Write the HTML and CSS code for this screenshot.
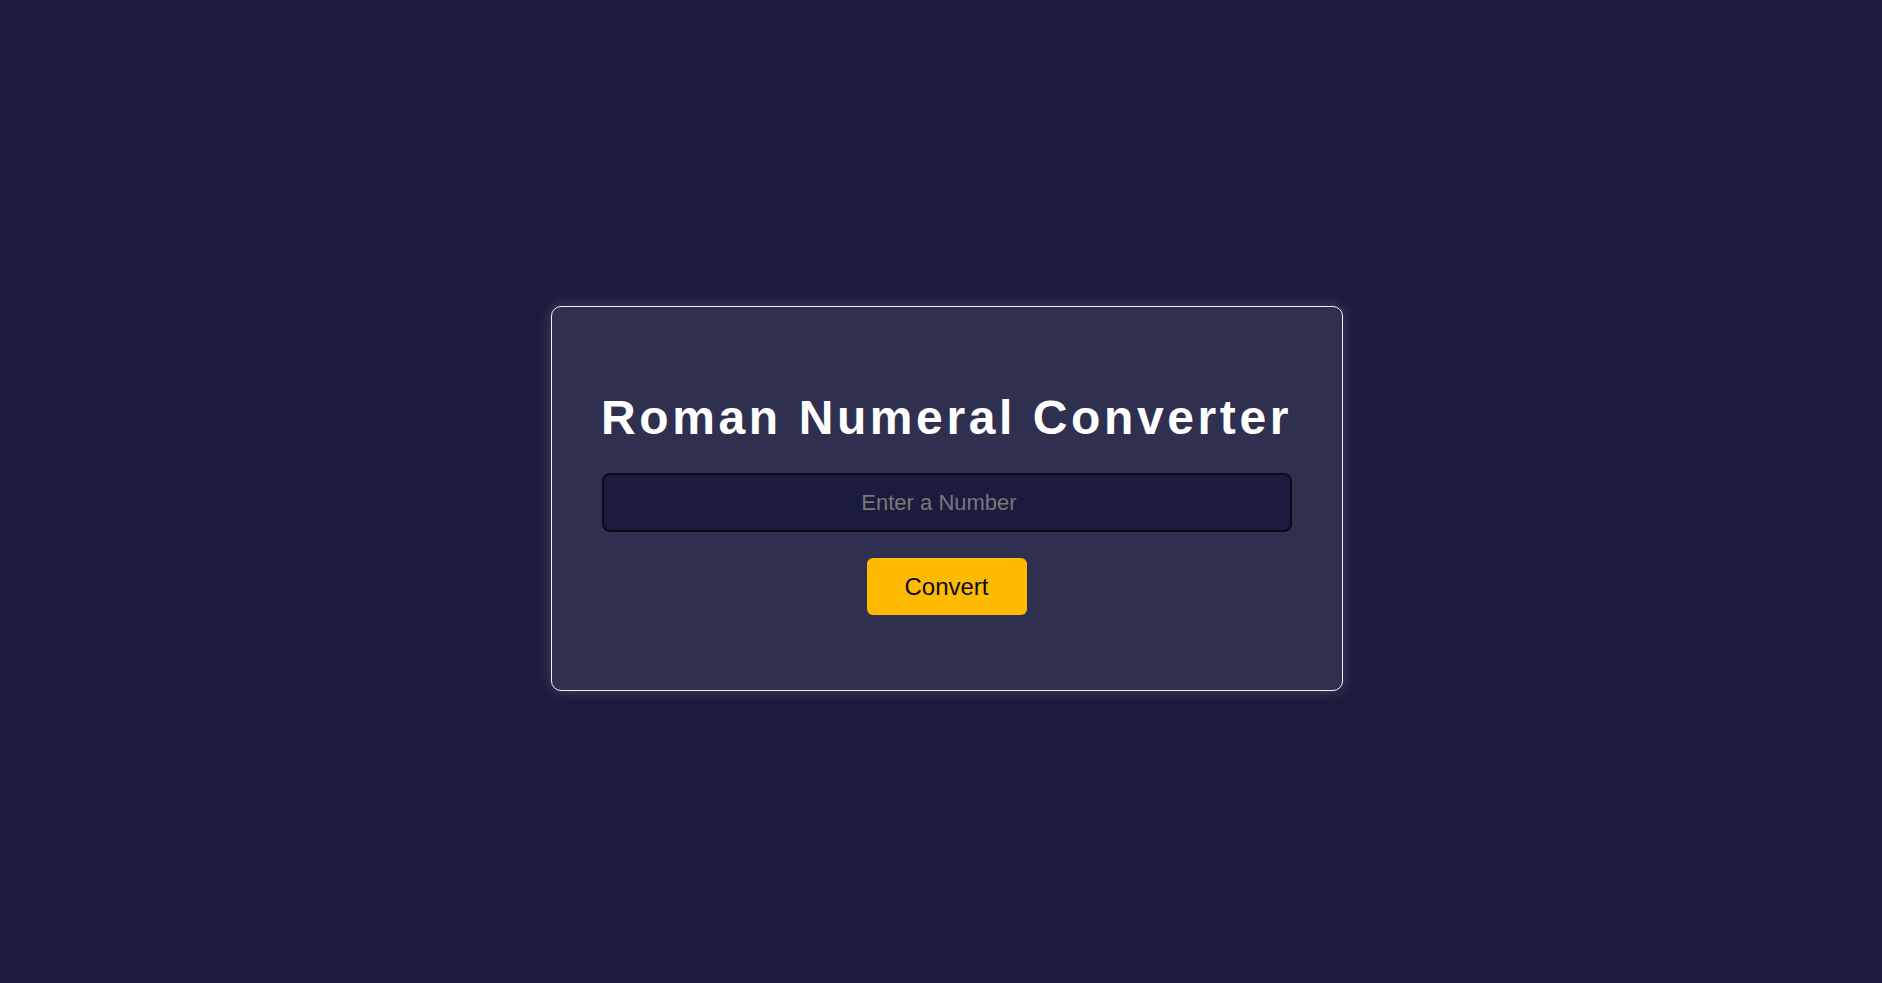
FILE: index.html
```html
<!DOCTYPE html>
<html lang="en">
<head>
<meta charset="UTF-8">
<title>Roman Numeral Converter</title>
<link rel="stylesheet" href="styles.css">
</head>
<body>
  <main class="card">
    <h1 class="title">Roman Numeral Converter</h1>
    <input class="number-input" type="number" placeholder="Enter a Number">
    <button class="convert-btn" type="button">Convert</button>
  </main>
</body>
</html>
```

FILE: styles.css
```css
html, body {
  margin: 0;
  height: 100%;
}
body {
  box-sizing: border-box;
  background: #1b1b3e;
  font-family: "Liberation Sans", Arial, sans-serif;
  display: flex;
  justify-content: center;
  align-items: center;
  padding: 14px 0 0 11px;
}
.card {
  box-sizing: border-box;
  width: 792px;
  height: 385px;
  background: #2f2f4f;
  border: 1px solid #f0f0f5;
  border-radius: 10px;
  box-shadow: 0 0 14px rgba(255, 255, 255, 0.18);
  padding: 54px 50px 50px;
  display: flex;
  flex-direction: column;
  align-items: center;
}
.title {
  margin: 31px 0 29px;
  color: #ffffff;
  font-size: 48px;
  font-weight: 700;
  letter-spacing: 3.6px;
  line-height: 52px;
  text-align: center;
  white-space: nowrap;
}
.number-input {
  box-sizing: border-box;
  width: 100%;
  height: 59px;
  background: #1b1b3e;
  border: 2px solid #0a0a15;
  border-radius: 8px;
  color: #ffffff;
  font-family: "Liberation Sans", Arial, sans-serif;
  font-size: 22px;
  text-align: center;
  outline: none;
  margin: 0;
}
.number-input::placeholder {
  color: #787878;
}
.convert-btn {
  margin-top: 26px;
  width: 160px;
  height: 57px;
  background: #feba00;
  border: none;
  border-radius: 6px;
  color: #0a0a23;
  font-family: "Liberation Sans", Arial, sans-serif;
  font-size: 24px;
  cursor: pointer;
}
```
